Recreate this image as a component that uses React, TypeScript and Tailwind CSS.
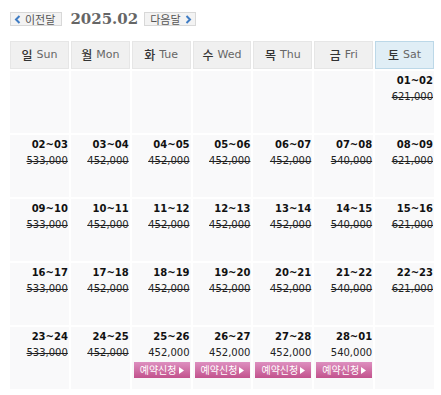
import React from 'react';

type Day = {
  range: string;
  price: string;
  open?: boolean;
};

const days = [
  { ko: '일', en: 'Sun' },
  { ko: '월', en: 'Mon' },
  { ko: '화', en: 'Tue' },
  { ko: '수', en: 'Wed' },
  { ko: '목', en: 'Thu' },
  { ko: '금', en: 'Fri' },
  { ko: '토', en: 'Sat' },
];

const weekPrices = ['533,000', '452,000', '452,000', '452,000', '452,000', '540,000', '621,000'];

function pad(n: number) {
  return n < 10 ? '0' + n : String(n);
}

// 2025.02 starts on Saturday
const cells: (Day | null)[] = [null, null, null, null, null, null];
for (let d = 1; d <= 28; d++) {
  const idx = cells.length % 7;
  const next = d === 28 ? 1 : d + 1;
  cells.push({
    range: `${pad(d)}~${pad(next)}`,
    price: weekPrices[idx],
    open: d >= 25,
  });
}
cells.push(null);

function Arrow({ dir }: { dir: 'left' | 'right' }) {
  return (
    <svg width="7" height="9" viewBox="0 0 7 9" className="shrink-0">
      <path
        d={dir === 'left' ? 'M5.5 1 L2 4.5 L5.5 8' : 'M1.5 1 L5 4.5 L1.5 8'}
        fill="none"
        stroke="#3f7cc4"
        strokeWidth="2"
      />
    </svg>
  );
}

function DayCell({ day }: { day: Day | null }) {
  return (
    <div className="h-[62px] bg-[#f9f9fa] pt-[3px] pr-[1px] text-right font-['DejaVu_Sans',sans-serif] text-[10px] text-[#111]">
      {day && (
        <>
          <div className="font-bold leading-[14px]">{day.range}</div>
          <div className={`leading-[18px] text-[#222] ${day.open ? '' : 'line-through'}`}>
            {day.price}
          </div>
          {day.open && (
            <div className="flex justify-start pl-[2px]">
              <button className="flex h-[16px] w-[58px] items-center justify-center gap-[2px] bg-gradient-to-b from-[#dd8fc0] to-[#c2528d] font-['Noto_Sans_CJK_KR',sans-serif] text-[10px] leading-none text-white">
                예약신청
                <svg width="5" height="7" viewBox="0 0 5 7">
                  <path d="M0 0 L5 3.5 L0 7 Z" fill="#fff" />
                </svg>
              </button>
            </div>
          )}
        </>
      )}
    </div>
  );
}

export default function App() {
  return (
    <div className="w-[441px] h-[395px] bg-white px-[10px] pt-[12px]">
      {/* NAV */}
      <div className="flex items-center h-[14px] mb-[15px]">
        <button className="flex items-center gap-[4px] h-[14px] pl-[3px] pr-[6px] border border-[#d8d8d8] bg-[#f3f3f3] font-['Noto_Sans_CJK_KR',sans-serif] text-[11px] leading-none text-[#555]">
          <Arrow dir="left" />
          이전달
        </button>
        <span className="ml-[8px] mr-[6px] font-['DejaVu_Serif',serif] text-[15px] font-bold leading-none text-[#666]">
          2025.02
        </span>
        <button className="flex items-center gap-[4px] h-[14px] pl-[5px] pr-[3px] border border-[#d8d8d8] bg-[#f3f3f3] font-['Noto_Sans_CJK_KR',sans-serif] text-[11px] leading-none text-[#555]">
          다음달
          <Arrow dir="right" />
        </button>
      </div>

      {/* CALENDAR */}
      <div className="grid grid-cols-7 gap-[2px] w-[424px]">
        {days.map((d) => (
          <div
            key={d.en}
            className={`flex h-[28px] items-center justify-center gap-[4px] border ${
              d.en === 'Sat' ? 'border-[#bcd8e8] bg-[#e0eef6]' : 'border-[#e6e6e6] bg-[#f0f0f0]'
            }`}
          >
            <span className="font-['Noto_Sans_CJK_KR',sans-serif] text-[12px] font-medium text-[#333]">{d.ko}</span>
            <span className="font-['DejaVu_Sans',sans-serif] text-[11px] text-[#666]">{d.en}</span>
          </div>
        ))}
        {cells.map((c, i) => (
          <DayCell key={i} day={c} />
        ))}
      </div>
    </div>
  );
}
